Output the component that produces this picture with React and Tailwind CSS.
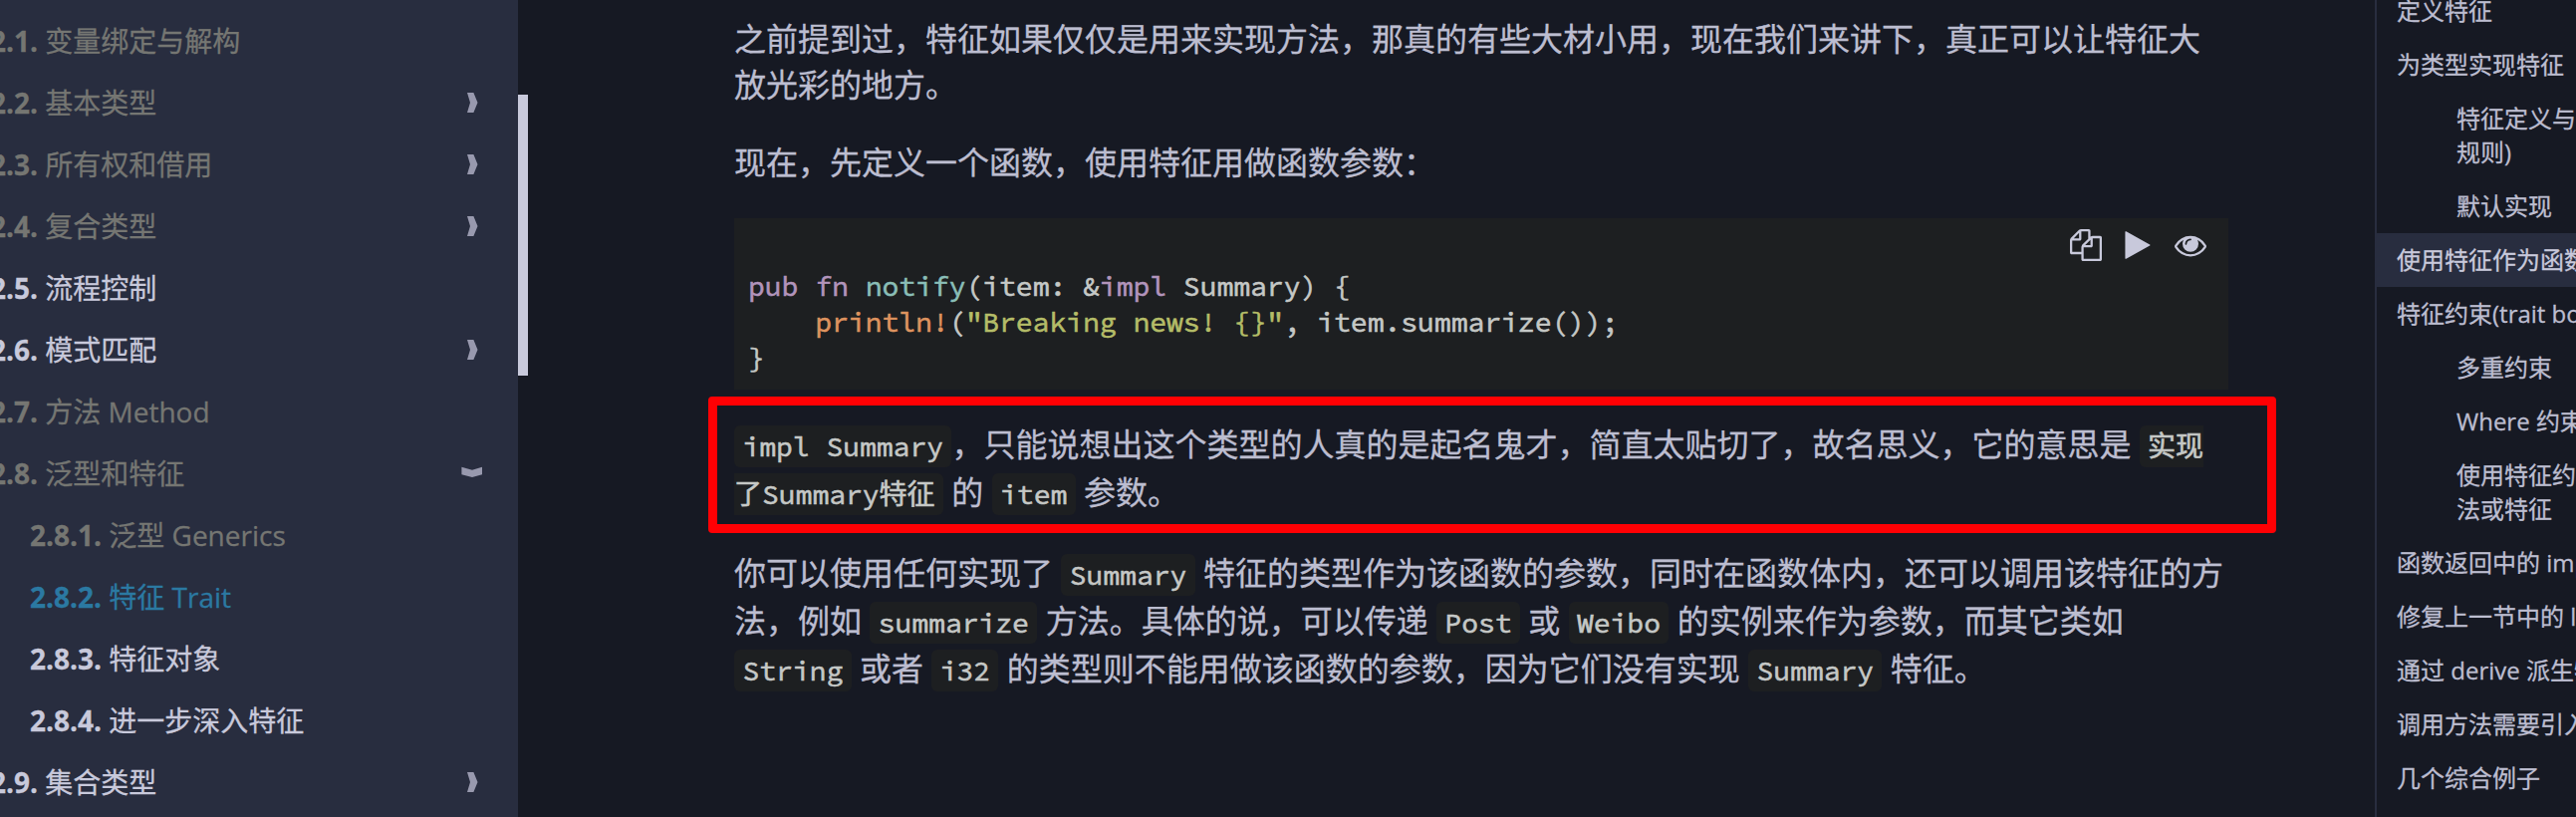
const chapters = [
  { no: "2.1.", title: "变量绑定与解构", tone: "visited" },
  { no: "2.2.", title: "基本类型", tone: "visited", fold: "right" },
  { no: "2.3.", title: "所有权和借用", tone: "visited", fold: "right" },
  { no: "2.4.", title: "复合类型", tone: "visited", fold: "right" },
  { no: "2.5.", title: "流程控制", tone: "normal" },
  { no: "2.6.", title: "模式匹配", tone: "normal", fold: "right" },
  { no: "2.7.", title: "方法 Method", tone: "visited" },
  { no: "2.8.", title: "泛型和特征", tone: "visited", fold: "down" },
  { no: "2.8.1.", title: "泛型 Generics", tone: "visited", nested: true },
  { no: "2.8.2.", title: "特征 Trait", tone: "active", nested: true },
  { no: "2.8.3.", title: "特征对象", tone: "normal", nested: true },
  { no: "2.8.4.", title: "进一步深入特征", tone: "normal", nested: true },
  { no: "2.9.", title: "集合类型", tone: "normal", fold: "right" },
];

const tones = {
  visited: "text-[#757672]",
  normal: "text-[#c8c9db]",
  active: "text-[#2b79a2]",
};

const toc = [
  { lines: ["定义特征"] },
  { lines: ["为类型实现特征"] },
  { lines: ["特征定义与实现的位置(孤儿", "规则)"], nested: true },
  { lines: ["默认实现"], nested: true },
  { lines: ["使用特征作为函数参数"], active: true },
  { lines: ["特征约束(trait bound)"] },
  { lines: ["多重约束"], nested: true },
  { lines: ["Where 约束"], nested: true },
  { lines: ["使用特征约束有条件地实现方", "法或特征"], nested: true },
  { lines: ["函数返回中的 impl Trait"] },
  { lines: ["修复上一节中的 largest 函数"] },
  { lines: ["通过 derive 派生特征"] },
  { lines: ["调用方法需要引入特征"] },
  { lines: ["几个综合例子"] },
];

const mono =
  "font-['Source_Code_Pro','Noto_Sans_CJK_SC',monospace] text-[28px] font-normal [-webkit-text-stroke:0.6px_currentColor]";

function Fold({ dir }) {
  return (
    <svg className="h-6 w-6 shrink-0 fill-[#9899ae]" viewBox="0 0 24 24">
      {dir === "right" ? (
        <path d="M7 2h6.4l4.1 10-4.1 10H7l3-10z" />
      ) : (
        <path d="M1.400 5.700L12 8.700 22 5.700v7.600L12 16 1.400 13.300z" />
      )}
    </svg>
  );
}

function Sidebar() {
  return (
    <nav className="h-full w-[520px] shrink-0 overflow-hidden bg-[#282d3f] pt-[10px] text-[28px]">
      {chapters.map((c) => (
        <div
          key={c.no}
          className={`flex h-[62px] items-center justify-between pr-[34px] whitespace-pre ${c.nested ? "pl-[30px]" : "-ml-[10px]"} ${tones[c.tone]}`}
        >
          <span className="pb-px leading-[40px] [-webkit-text-stroke:0.3px_currentColor]">
            <strong className="font-bold">{c.no}</strong> {c.title}
          </span>
          {c.fold && <Fold dir={c.fold} />}
        </div>
      ))}
    </nav>
  );
}

function Code({ children, className = "rounded-md px-[8.4px]" }) {
  return (
    <code className={`inline-block h-[42px] bg-[#1d1f21] align-baseline leading-[42px] text-[#c5c8c6] ${mono} ${className}`}>
      {children}
    </code>
  );
}

function Line({ children, className = "h-12 leading-[48px]" }) {
  return <div className={`whitespace-pre ${className}`}>{children}</div>;
}

function CodeButtons() {
  return (
    <div className="absolute top-[11px] right-[22px] flex fill-[#c8c9db]">
      <svg className="h-8 w-8" viewBox="0 0 1792 1792">
        <path d="M1696 384q40 0 68 28t28 68v1216q0 40-28 68t-68 28h-960q-40 0-68-28t-28-68v-288h-544q-40 0-68-28t-28-68v-672q0-40 20-88t48-76l408-408q28-28 76-48t88-20h416q40 0 68 28t28 68v328q68-40 128-40h416zm-544 213l-299 299h299v-299zm-640-384l-299 299h299v-299zm196 647l316-316v-416h-384v416q0 40-28 68t-68 28h-416v640h512v-256q0-40 20-88t48-76zm956 804v-1152h-384v416q0 40-28 68t-68 28h-416v640h896z" />
      </svg>
      <svg className="ml-5 h-8 w-8" viewBox="0 0 1792 1792">
        <path d="M1576 927l-1328 738q-23 13-39.500 3t-16.500-36v-1472q0-26 16.500-36t39.500 3l1328 738q23 13 23 31t-23 31z" />
      </svg>
      <svg className="ml-[21px] h-8 w-8" viewBox="0 0 1792 1792">
        <path d="M1664 960q-152-236-381-353 61 104 61 225 0 185-131.500 316.500t-316.500 131.500-316.500-131.500-131.500-316.500q0-121 61-225-229 117-381 353 133 205 333.500 326.500t434.500 121.500 434.500-121.500 333.500-326.500zm-720-384q0-20-14-34t-34-14q-125 0-214.500 89.500t-89.500 214.500q0 20 14 34t34 14 34-14 14-34q0-86 61-147t147-61q20 0 34-14t14-34zm848 384q0 34-20 69-140 230-376.500 368.500t-499.500 138.500-499.500-139-376.500-368q-20-35-20-69t20-69q140-229 376.500-368t499.500-139 499.500 139 376.500 368q20 35 20 69z" />
      </svg>
    </div>
  );
}

function Content() {
  return (
    <main className="ml-[217px] w-[1500px] shrink-0 pt-4 text-[32px] text-[#bcbdd0] [-webkit-text-stroke:0.3px_currentColor]">
      <Line className="h-[46px] leading-[46px]">之前提到过，特征如果仅仅是用来实现方法，那真的有些大材小用，现在我们来讲下，真正可以让特征大</Line>
      <Line className="h-[46px] leading-[46px]">放光彩的地方。</Line>
      <Line className="mt-8 h-[46px] leading-[46px]">现在，先定义一个函数，使用特征用做函数参数：</Line>

      <div className="relative mt-[33px] h-[172px] bg-[#1d1f21] px-[14px] pt-[50px]">
        <CodeButtons />
        <pre className={`leading-9 text-[#c5c8c6] ${mono}`}>
          <span className="text-[#b294bb]">pub</span> <span className="text-[#b294bb]">fn</span>{" "}
          <span className="text-[#8abeb7]">notify</span>(item: &amp;<span className="text-[#b294bb]">impl</span>
          {" Summary) {\n    "}
          <span className="text-[#de935f]">println!</span>(
          <span className="text-[#b5bd68]">{'"Breaking news! {}"'}</span>
          {", item.summarize());\n}"}
        </pre>
      </div>

      <div className="mt-[7px] -mr-[48px] -ml-[26px] h-[137px] rounded-[4px] border-[9px] border-[#ff0004] pt-[15px] pl-[17px]">
        <Line>
          <Code>impl Summary</Code>，只能说想出这个类型的人真的是起名鬼才，简直太贴切了，故名思义，它的意思是{" "}
          <Code className="rounded-l-md pl-[8.4px]">实现</Code>
        </Line>
        <Line>
          <Code className="rounded-r-md pr-[8.4px]">了Summary特征</Code> 的 <Code>item</Code> 参数。
        </Line>
      </div>

      <div className="mt-4">
        <Line>
          你可以使用任何实现了 <Code>Summary</Code> 特征的类型作为该函数的参数，同时在函数体内，还可以调用该特征的方
        </Line>
        <Line>
          法，例如 <Code>summarize</Code> 方法。具体的说，可以传递 <Code>Post</Code> 或 <Code>Weibo</Code>{" "}
          的实例来作为参数，而其它类如
        </Line>
        <Line>
          <Code>String</Code> 或者 <Code>i32</Code> 的类型则不能用做该函数的参数，因为它们没有实现{" "}
          <Code>Summary</Code> 特征。
        </Line>
      </div>
    </main>
  );
}

function Toc() {
  return (
    <aside className="ml-auto h-full w-[202px] shrink-0 overflow-hidden border-l-2 border-[#282d3f] text-2xl text-[#bcbdd0] [-webkit-text-stroke:0.3px_currentColor]">
      <div className="-mt-4">
        {toc.map((t) => (
          <div
            key={t.lines[0]}
            className={`py-[10px] ${t.nested ? "pl-20" : "pl-5"} ${t.active ? "bg-[#282d3f] text-[#c8c9db]" : ""}`}
          >
            {t.lines.map((l) => (
              <div key={l} className="h-[34px] leading-[34px] whitespace-pre">
                {l}
              </div>
            ))}
          </div>
        ))}
      </div>
    </aside>
  );
}

export default function App() {
  return (
    <div
      lang="zh-CN"
      className="flex h-[820px] w-[2586px] overflow-hidden bg-[#161923] font-['Open_Sans','Noto_Sans_CJK_SC',sans-serif]"
    >
      <Sidebar />
      <div className="-mr-[10px] mt-[95px] h-[282px] w-[10px] shrink-0 bg-[#c8c9db]" />
      <Content />
      <Toc />
    </div>
  );
}
